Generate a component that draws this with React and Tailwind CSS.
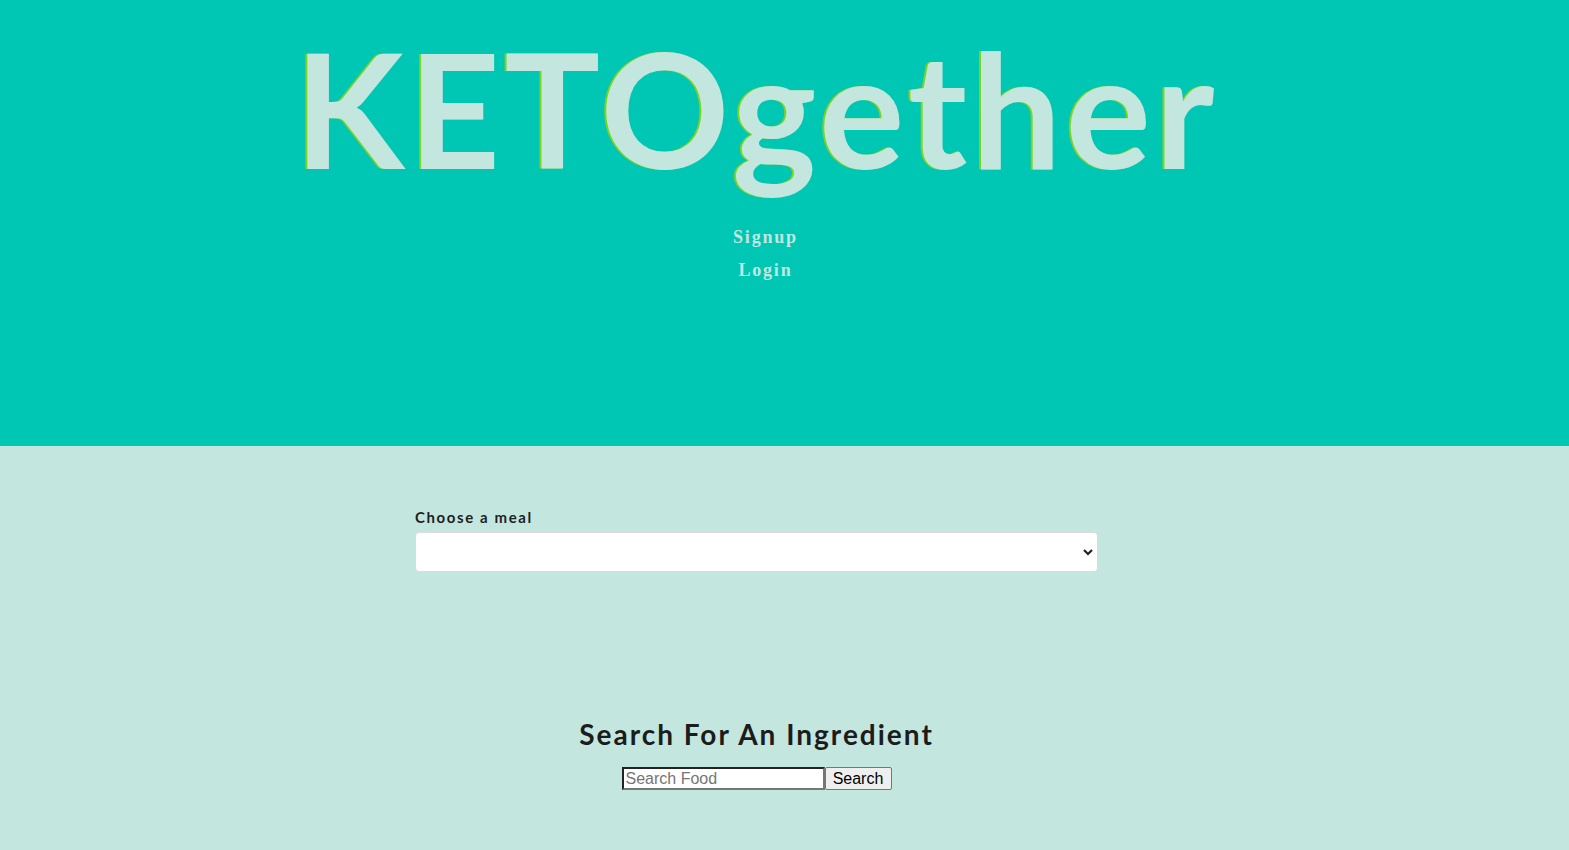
export default function App() {
  return (
    <div className="min-h-[850px] w-full bg-[#c3e6df]">
      <header className="h-[446px] bg-[#00c7b4] flex flex-col items-center pr-[56px]">
        <h1
          className="font-['Lato',sans-serif] font-bold text-[160px] tracking-[4px] leading-none mt-[27px] text-[#c3e6df] [text-shadow:-2px_0_0_#7ed321]"
        >
          KETOgether
        </h1>
        <nav className="flex flex-col items-center mt-[34px] font-['Liberation_Serif',serif] font-bold text-[18px] tracking-[1.8px] text-[#c3e6df] pl-[18px]">
          <a className="leading-[33px]">Signup</a>
          <a className="leading-[33px]">Login</a>
        </nav>
      </header>
      <main className="flex flex-col items-center pr-[56px]">
        <div className="w-[683px] mt-[61px] flex flex-col">
          <label className="font-['Lato',sans-serif] font-bold text-[15px] tracking-[1.6px] text-[#1f1f1f] leading-[20px]">
            Choose a meal
          </label>
          <div className="relative mt-[5px] h-[40px] bg-white border border-[#dcdcdc] rounded-[4px]">
            <svg className="absolute right-[3px] top-[14px]" width="12" height="10" viewBox="0 0 12 10">
              <path d="M2 3 L6 7 L10 3" stroke="#222" strokeWidth="2.2" fill="none" />
            </svg>
          </div>
        </div>
        <h2 className="mt-[145px] font-['Lato',sans-serif] font-bold text-[28px] tracking-[2px] text-[#1c1c1c] leading-[34px]">
          Search For An Ingredient
        </h2>
        <div className="flex mt-[16px] font-['Liberation_Sans',sans-serif] text-[16px]">
          <input
            placeholder="Search Food"
            className="w-[203px] h-[23px] bg-white border-2 border-t-[#222] border-l-[#222] border-b-[#767676] border-r-[#767676] px-[2px] text-[16px] placeholder:text-[#757575] outline-none"
          />
          <button className="w-[67px] h-[23px] bg-[#efefef] border border-[#767676] rounded-[2px] text-black leading-none">
            Search
          </button>
        </div>
      </main>
    </div>
  );
}
